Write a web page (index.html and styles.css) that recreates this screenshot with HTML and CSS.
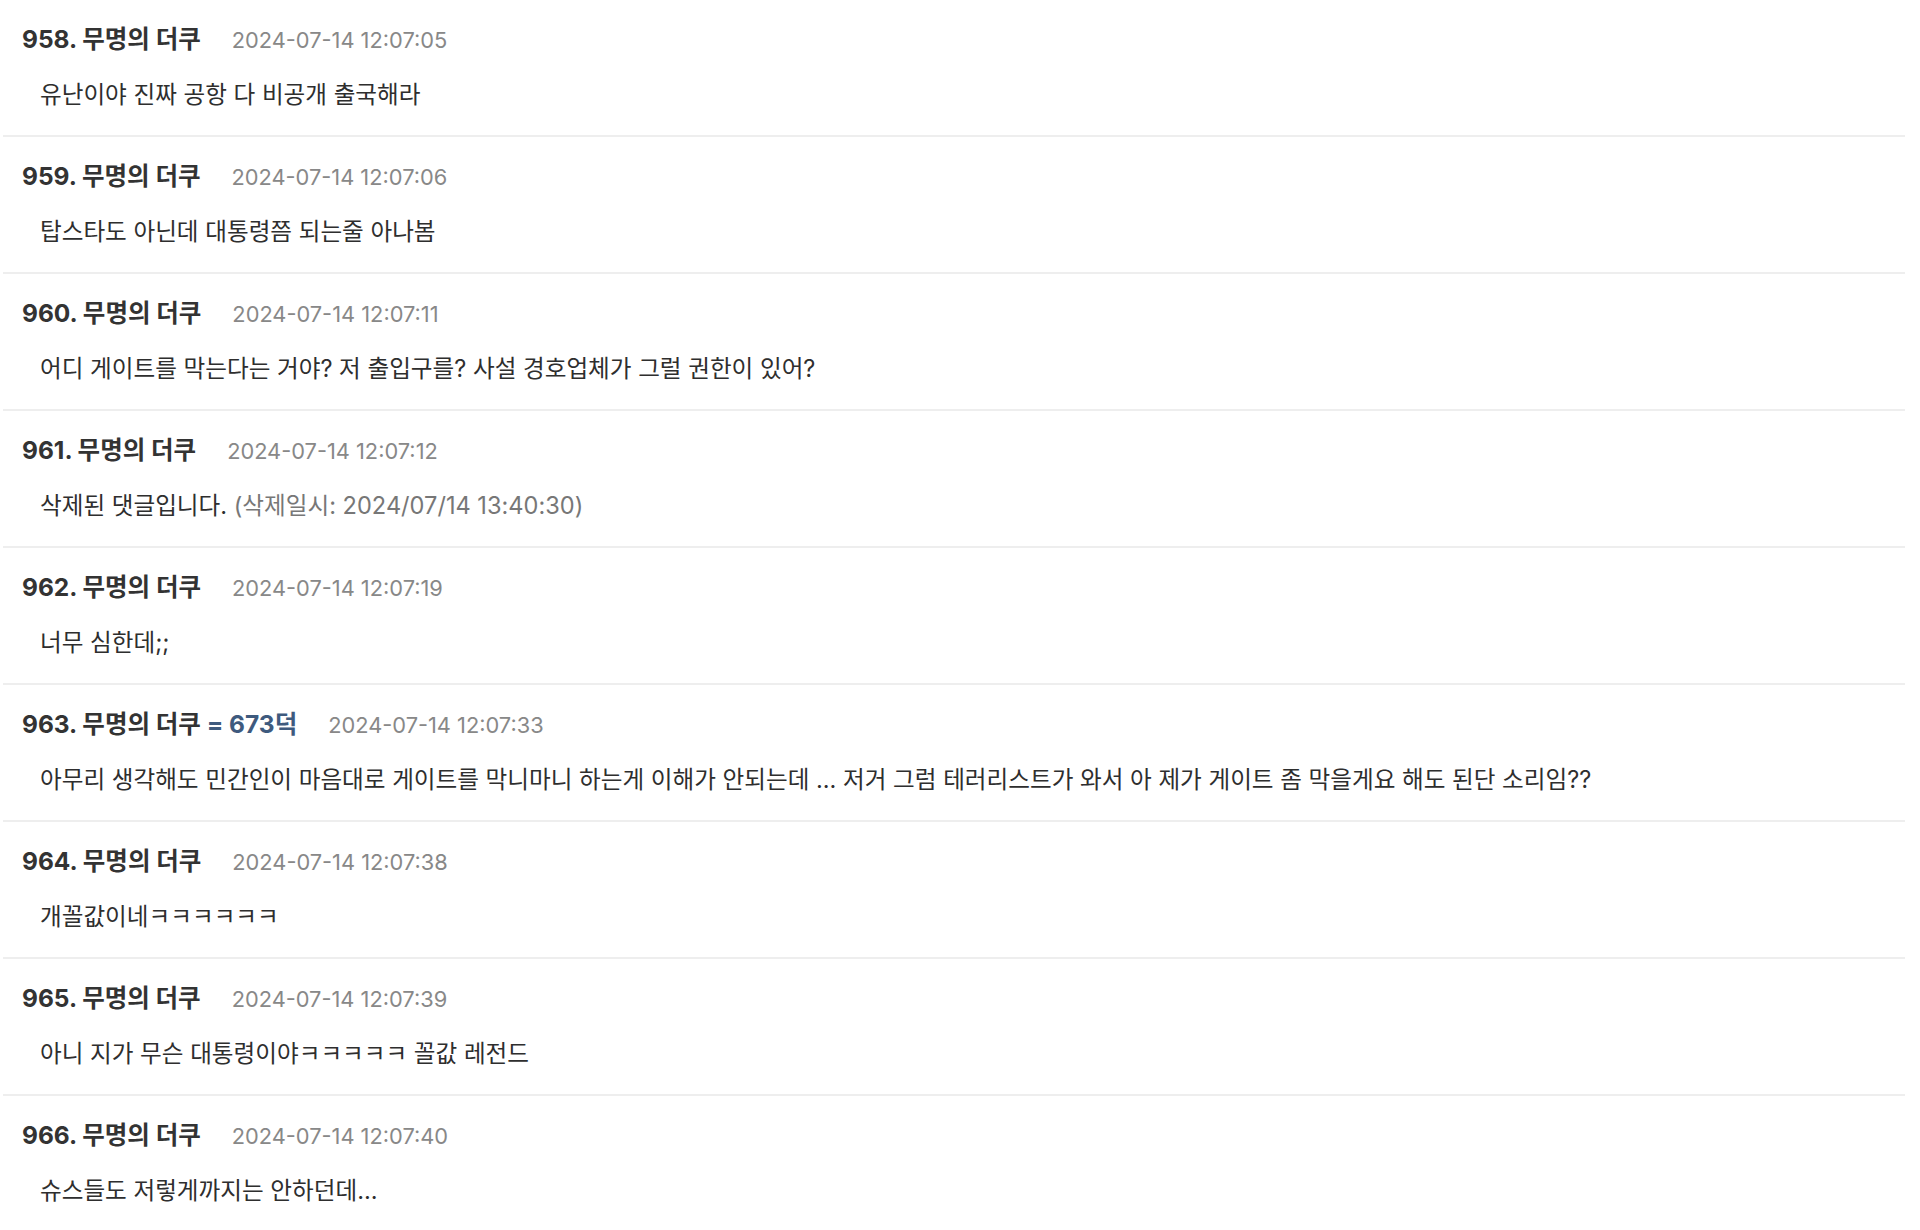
FILE: index.html
```html
<!DOCTYPE html>
<html lang="ko">
<head>
<meta charset="utf-8">
<title>댓글</title>
<link rel="stylesheet" href="styles.css">
</head>
<body>
<ul class="comments">
  <li class="comment">
    <div class="head"><span class="name">958. 무명의 더쿠</span><span class="date">2024-07-14 12:07:05</span></div>
    <div class="body">유난이야 진짜 공항 다 비공개 출국해라</div>
  </li>
  <li class="comment">
    <div class="head"><span class="name">959. 무명의 더쿠</span><span class="date">2024-07-14 12:07:06</span></div>
    <div class="body">탑스타도 아닌데 대통령쯤 되는줄 아나봄</div>
  </li>
  <li class="comment">
    <div class="head"><span class="name">960. 무명의 더쿠</span><span class="date">2024-07-14 12:07:11</span></div>
    <div class="body">어디 게이트를 막는다는 거야? 저 출입구를? 사설 경호업체가 그럴 권한이 있어?</div>
  </li>
  <li class="comment">
    <div class="head"><span class="name">961. 무명의 더쿠</span><span class="date">2024-07-14 12:07:12</span></div>
    <div class="body">삭제된 댓글입니다. <span class="deleted">(삭제일시: 2024/07/14 13:40:30)</span></div>
  </li>
  <li class="comment">
    <div class="head"><span class="name">962. 무명의 더쿠</span><span class="date">2024-07-14 12:07:19</span></div>
    <div class="body">너무 심한데;;</div>
  </li>
  <li class="comment">
    <div class="head"><span class="name">963. 무명의 더쿠 <span class="ref">= 673덕</span></span><span class="date">2024-07-14 12:07:33</span></div>
    <div class="body">아무리 생각해도 민간인이 마음대로 게이트를 막니마니 하는게 이해가 안되는데 ... 저거 그럼 테러리스트가 와서 아 제가 게이트 좀 막을게요 해도 된단 소리임??</div>
  </li>
  <li class="comment">
    <div class="head"><span class="name">964. 무명의 더쿠</span><span class="date">2024-07-14 12:07:38</span></div>
    <div class="body">개꼴값이네ㅋㅋㅋㅋㅋㅋ</div>
  </li>
  <li class="comment">
    <div class="head"><span class="name">965. 무명의 더쿠</span><span class="date">2024-07-14 12:07:39</span></div>
    <div class="body">아니 지가 무슨 대통령이야ㅋㅋㅋㅋㅋ 꼴값 레전드</div>
  </li>
  <li class="comment">
    <div class="head"><span class="name">966. 무명의 더쿠</span><span class="date">2024-07-14 12:07:40</span></div>
    <div class="body">슈스들도 저렇게까지는 안하던데...</div>
  </li>
</ul>
</body>
</html>
```

FILE: styles.css
```css
html, body {
  margin: 0;
  padding: 0;
  background: #fff;
}
body {
  font-family: "Inter", "Noto Sans CJK KR", sans-serif;
  color: #333;
}
.comments {
  list-style: none;
  margin: 0;
  padding: 0 15px 0 3px;
}
.comment {
  height: 137px;
  box-sizing: border-box;
  padding: 22px 0 0 19px;
  border-bottom: 2px solid #eeeeee;
}
.head {
  display: flex;
  align-items: baseline;
  gap: 31px;
  height: 34px;
  line-height: 34px;
}
.name {
  font-size: 24.5px;
  font-weight: bold;
  color: #333;
}
.ref {
  color: #3e5a7e;
}
.date {
  font-size: 21.8px;
  color: #888;
}
.body {
  margin-top: 22px;
  padding-left: 18px;
  font-size: 23.6px;
  line-height: 34px;
  color: #2e2e2e;
}
.deleted {
  color: #777;
}
```
